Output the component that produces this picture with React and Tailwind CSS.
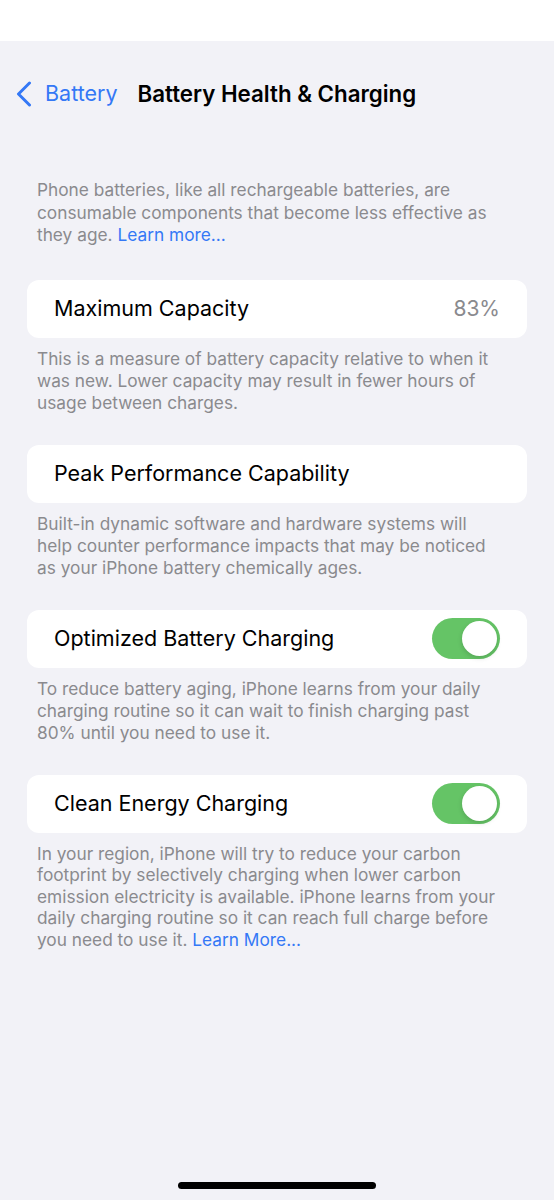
function Toggle() {
  return (
    <div className="w-[68px] h-[41px] rounded-full bg-[#65c466] flex items-center justify-end p-[3px]">
      <div className="w-[35px] h-[35px] rounded-full bg-white shadow-[0_2px_5px_rgba(0,0,0,0.15)]" />
    </div>
  );
}

function Row({ label, value, toggle }) {
  return (
    <div className="mx-[27px] h-[58px] rounded-[12px] bg-white flex items-center justify-between pl-[27px] pr-[27px]">
      <span className="text-[21.5px] text-black">{label}</span>
      {value && <span className="text-[21px] text-[#8a8a8e]">{value}</span>}
      {toggle && <Toggle />}
    </div>
  );
}

function Note({ children }) {
  return (
    <p className="pl-[37px] pr-[50px] pt-[10px] text-[17.3px] leading-[22px] text-[#8a8a8e]">{children}</p>
  );
}

export default function App() {
  return (
    <div
      className="w-[554px] h-[1200px] bg-[#f2f2f7] flex flex-col"
      style={{ fontFamily: "Inter, 'Noto Sans', sans-serif" }}
    >
      <div className="h-[41px] bg-white" />
      <div className="h-[105px] flex items-center pl-[16px]">
        <div className="flex items-center text-[#3478f6]">
          <svg width="16" height="26" viewBox="0 0 16 26" fill="none">
            <path d="M13.5 2 L2.5 13 L13.5 24" stroke="currentColor" strokeWidth="3" strokeLinecap="round" strokeLinejoin="round" />
          </svg>
          <span className="text-[21.5px] ml-[13px]">Battery</span>
        </div>
        <span className="ml-[20px] text-[22.3px] font-semibold text-black">Battery Health &amp; Charging</span>
      </div>
      <p className="pl-[37px] pr-[50px] pt-[33px] text-[17.3px] leading-[22.5px] text-[#8a8a8e]">
        Phone batteries, like all rechargeable batteries, are consumable components that become less effective as they age.{" "}
        <span className="text-[#3478f6]">Learn more...</span>
      </p>
      <div className="mt-[33px]">
        <Row label="Maximum Capacity" value="83%" />
        <Note>
          This is a measure of battery capacity relative to when it was new. Lower capacity may result in fewer hours of usage between charges.
        </Note>
      </div>
      <div className="mt-[31px]">
        <Row label="Peak Performance Capability" />
        <Note>
          Built-in dynamic software and hardware systems will help counter performance impacts that may be noticed as your iPhone battery chemically ages.
        </Note>
      </div>
      <div className="mt-[31px]">
        <Row label="Optimized Battery Charging" toggle />
        <Note>
          To reduce battery aging, iPhone learns from your daily charging routine so it can wait to finish charging past 80% until you need to use it.
        </Note>
      </div>
      <div className="mt-[31px]">
        <Row label="Clean Energy Charging" toggle />
        <p className="pl-[37px] pr-[50px] pt-[10px] text-[17.3px] leading-[21.5px] text-[#8a8a8e]">
          In your region, iPhone will try to reduce your carbon footprint by selectively charging when lower carbon emission electricity is available. iPhone learns from your daily charging routine so it can reach full charge before you need to use it.{" "}
          <span className="text-[#3478f6]">Learn More...</span>
        </p>
      </div>
      <div className="flex-1" />
      <div className="flex justify-center pb-[11px]">
        <div className="w-[198px] h-[7px] rounded-full bg-black" />
      </div>
    </div>
  );
}
